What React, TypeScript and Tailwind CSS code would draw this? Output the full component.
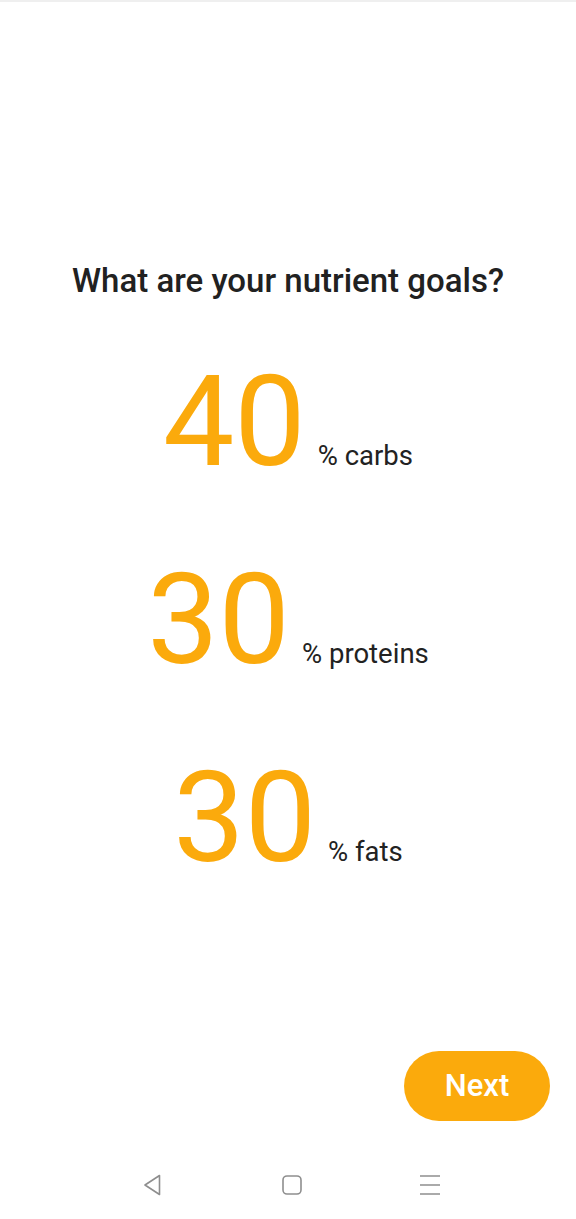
const goals = [
  { value: 40, label: "% carbs" },
  { value: 30, label: "% proteins" },
  { value: 30, label: "% fats" },
];

const NavBar = function () {
  return (
    <div className="h-[69px] relative flex items-center">
      {/* back */}
      <svg className="absolute left-[141px]" width="24" height="24" viewBox="0 0 24 24">
        <path
          d="M18.5 2.5 L4 12 L18.5 21.5 Z"
          fill="none"
          stroke="#8e8e8e"
          strokeWidth="1.6"
          strokeLinejoin="round"
        />
      </svg>
      {/* home */}
      <svg className="absolute left-[280px]" width="24" height="24" viewBox="0 0 24 24">
        <rect x="3" y="3" width="18" height="18" rx="4" fill="none" stroke="#8e8e8e" strokeWidth="1.6" />
      </svg>
      {/* menu */}
      <svg className="absolute left-[418px]" width="24" height="24" viewBox="0 0 24 24">
        <path d="M2 3 H22 M2 12 H22 M2 21 H22" stroke="#8e8e8e" strokeWidth="1.6" />
      </svg>
    </div>
  );
};

export default function App() {
  return (
    <div
      className="w-[576px] h-[1219px] bg-white flex flex-col border-t-2 border-[#efefef]"
      style={{ fontFamily: "Roboto, 'Noto Sans', sans-serif" }}
    >
      <h1 className="mt-[261px] text-center text-[33px] leading-[36px] font-medium text-[#212121]">
        What are your nutrient goals?
      </h1>

      <div className="mt-[59px] flex flex-col gap-[71px]">
        {goals.map((g) => (
          <div key={g.label} className="flex items-baseline justify-center gap-[12px]">
            <span className="text-[127px] leading-[127px] text-[#fbaa0c]">{g.value}</span>
            <span className="text-[27.5px] text-[#222222]">{g.label}</span>
          </div>
        ))}
      </div>

      <div className="flex-1" />

      <div className="flex justify-end pr-[26px] pb-[29px]">
        <button className="w-[146px] h-[70px] rounded-full bg-[#fbaa0c] text-white text-[31px] font-medium">
          Next
        </button>
      </div>

      <NavBar />
    </div>
  );
}
